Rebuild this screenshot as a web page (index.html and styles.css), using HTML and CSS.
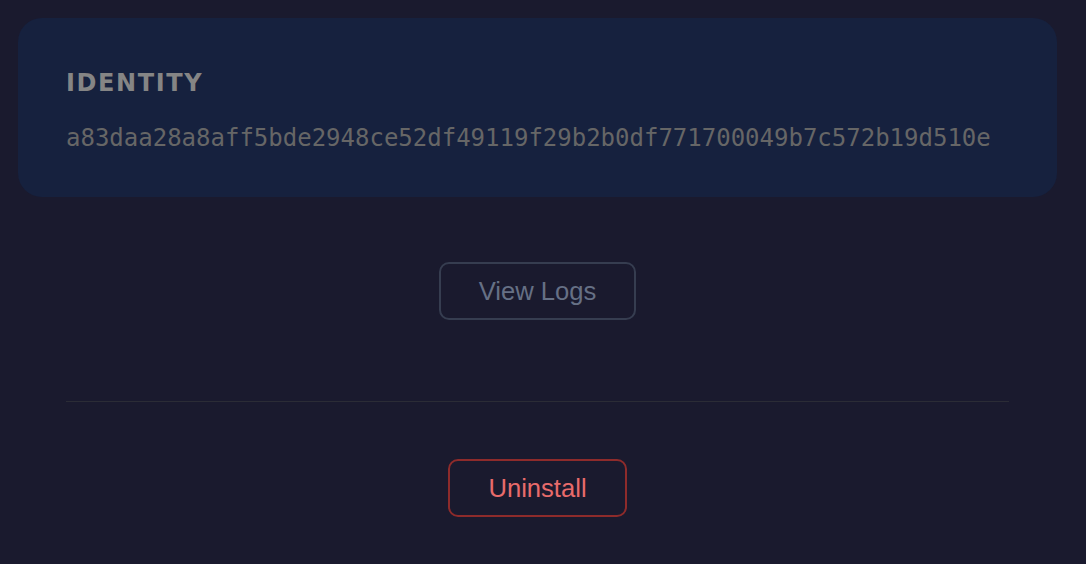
FILE: index.html
```html
<!DOCTYPE html>
<html lang="en">
<head>
    <meta charset="UTF-8">
    <title>Service</title>
    <link rel="stylesheet" href="styles.css">
</head>
<body>

<div class="panel">
    <div class="identity-card">
        <h2 class="identity-title">IDENTITY</h2>
        <p class="identity-hash">a83daa28a8aff5bde2948ce52df49119f29b2b0df771700049b7c572b19d510e</p>
    </div>

    <div class="actions">
        <button class="btn btn-logs">View Logs</button>
    </div>

    <hr class="divider">

    <div class="danger">
        <button class="btn btn-uninstall">Uninstall</button>
    </div>
</div>

</body>
</html>
```

FILE: styles.css
```css
* {
    margin: 0;
    padding: 0;
    box-sizing: border-box;
}

body {
    background: #1a1a2e;
    font-family: "Liberation Sans", Arial, sans-serif;
}

.panel {
    width: 1039px;
    margin: 18px 0 0 18px;
}

.identity-card {
    background: #16213e;
    border-radius: 24px;
    padding: 49px 48px 43px;
}

.identity-title {
    font-family: "DejaVu Sans", sans-serif;
    font-weight: bold;
    font-size: 24px;
    line-height: 32px;
    letter-spacing: 1.6px;
    color: #858585;
    margin-bottom: 23px;
}

.identity-hash {
    font-family: "DejaVu Sans Mono", monospace;
    font-size: 24px;
    line-height: 32px;
    color: #666666;
}

.actions {
    display: flex;
    justify-content: center;
    padding-top: 65px;
}

.danger {
    display: flex;
    justify-content: center;
}

.btn {
    font-family: "Liberation Sans", Arial, sans-serif;
    font-size: 25.6px;
    line-height: 30px;
    padding: 12px 38px;
    background: transparent;
    border: 2px solid;
    border-radius: 10px;
    cursor: pointer;
}

.btn-logs {
    color: #667085;
    border-color: #363d50;
}

.btn-uninstall {
    color: #e86b6b;
    border-color: #8e2b2b;
}

.divider {
    border: none;
    height: 1px;
    background: #2b2c36;
    margin: 81px 48px 57px;
}
```
